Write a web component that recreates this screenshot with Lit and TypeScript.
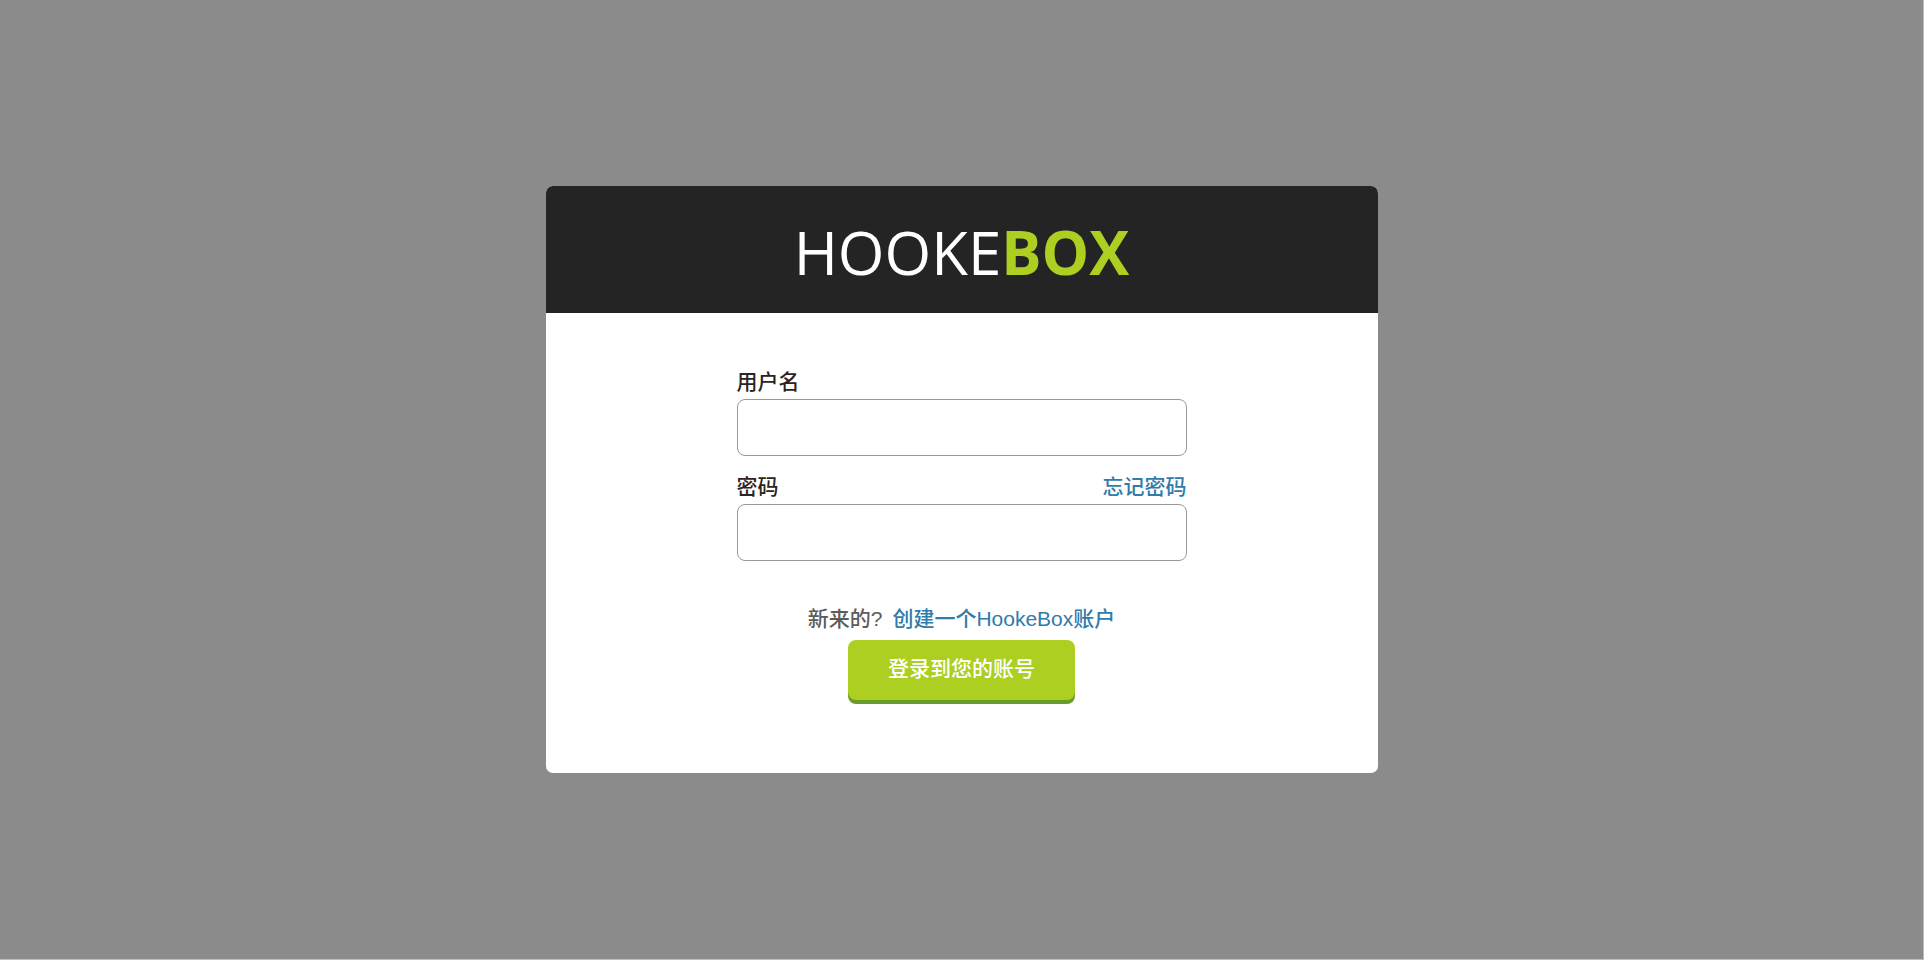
import { LitElement, html, css } from "lit";
import { customElement } from "lit/decorators.js";

@customElement("app-root")
export class AppRoot extends LitElement {
  static styles = css`
    :host {
      display: flex;
      box-sizing: border-box;
      min-height: 100vh;
      padding: 16px;
      align-items: center;
      justify-content: center;
      background: #8b8b8b;
      border: solid #bdbdbd;
      border-width: 0 1px 1px 0;
      font-family: "Liberation Sans", "Noto Sans CJK SC", sans-serif;
      font-size: 21px;
      font-weight: 500;
      line-height: 30px;
      color: #2a2424;
    }
    .card {
      width: 100%;
      max-width: 832px;
      overflow: hidden;
      border-radius: 7px;
      background: #fff;
    }
    .header {
      padding: 27px 24px 21px;
      background: #242424;
      text-align: center;
    }
    .logo {
      margin: 0;
      font: 400 60px/79px "Open Sans", sans-serif;
      color: #fff;
    }
    .logo strong {
      font-weight: 700;
      color: #accf22;
    }
    .form {
      display: flex;
      flex-direction: column;
      box-sizing: border-box;
      max-width: 450px;
      margin: 0 auto;
      padding: 54px 0 69px;
    }
    .field {
      display: grid;
      grid-template-columns: 1fr auto;
      row-gap: 2px;
      margin-bottom: 16px;
    }
    .field input {
      grid-column: 1 / -1;
      box-sizing: border-box;
      width: 100%;
      height: 57px;
      padding: 0 16px;
      border: 1px solid #999;
      border-radius: 8px;
      background: #fff;
      font: inherit;
      color: inherit;
      outline-color: #accf22;
    }
    a {
      color: #2f7cab;
      text-decoration: none;
    }
    a:hover {
      text-decoration: underline;
    }
    .signup {
      display: flex;
      justify-content: center;
      gap: 10px;
      margin: 27px 0 6px;
      color: #5c5c5c;
    }
    .submit {
      align-self: center;
      padding: 14px 40px 16px;
      border: 0;
      border-radius: 8px;
      margin-bottom: 4px;
      background: #accf22;
      box-shadow: 0 4px 0 #6a9c2a;
      font: inherit;
      color: #fff;
      cursor: pointer;
    }
  `;

  private onSubmit(event: Event) {
    event.preventDefault();
  }

  render() {
    return html`
      <main class="card">
        <header class="header">
          <h1 class="logo">HOOKE<strong>BOX</strong></h1>
        </header>
        <form class="form" @submit=${this.onSubmit}>
          <div class="field">
            <label for="username">用户名</label>
            <input id="username" name="username" type="text" autocomplete="username" />
          </div>
          <div class="field">
            <label for="password">密码</label>
            <a href="#forgot">忘记密码</a>
            <input id="password" name="password" type="password" autocomplete="current-password" />
          </div>
          <p class="signup">
            <span>新来的?</span>
            <a href="#register">创建一个HookeBox账户</a>
          </p>
          <button class="submit" type="submit">登录到您的账号</button>
        </form>
      </main>
    `;
  }
}
